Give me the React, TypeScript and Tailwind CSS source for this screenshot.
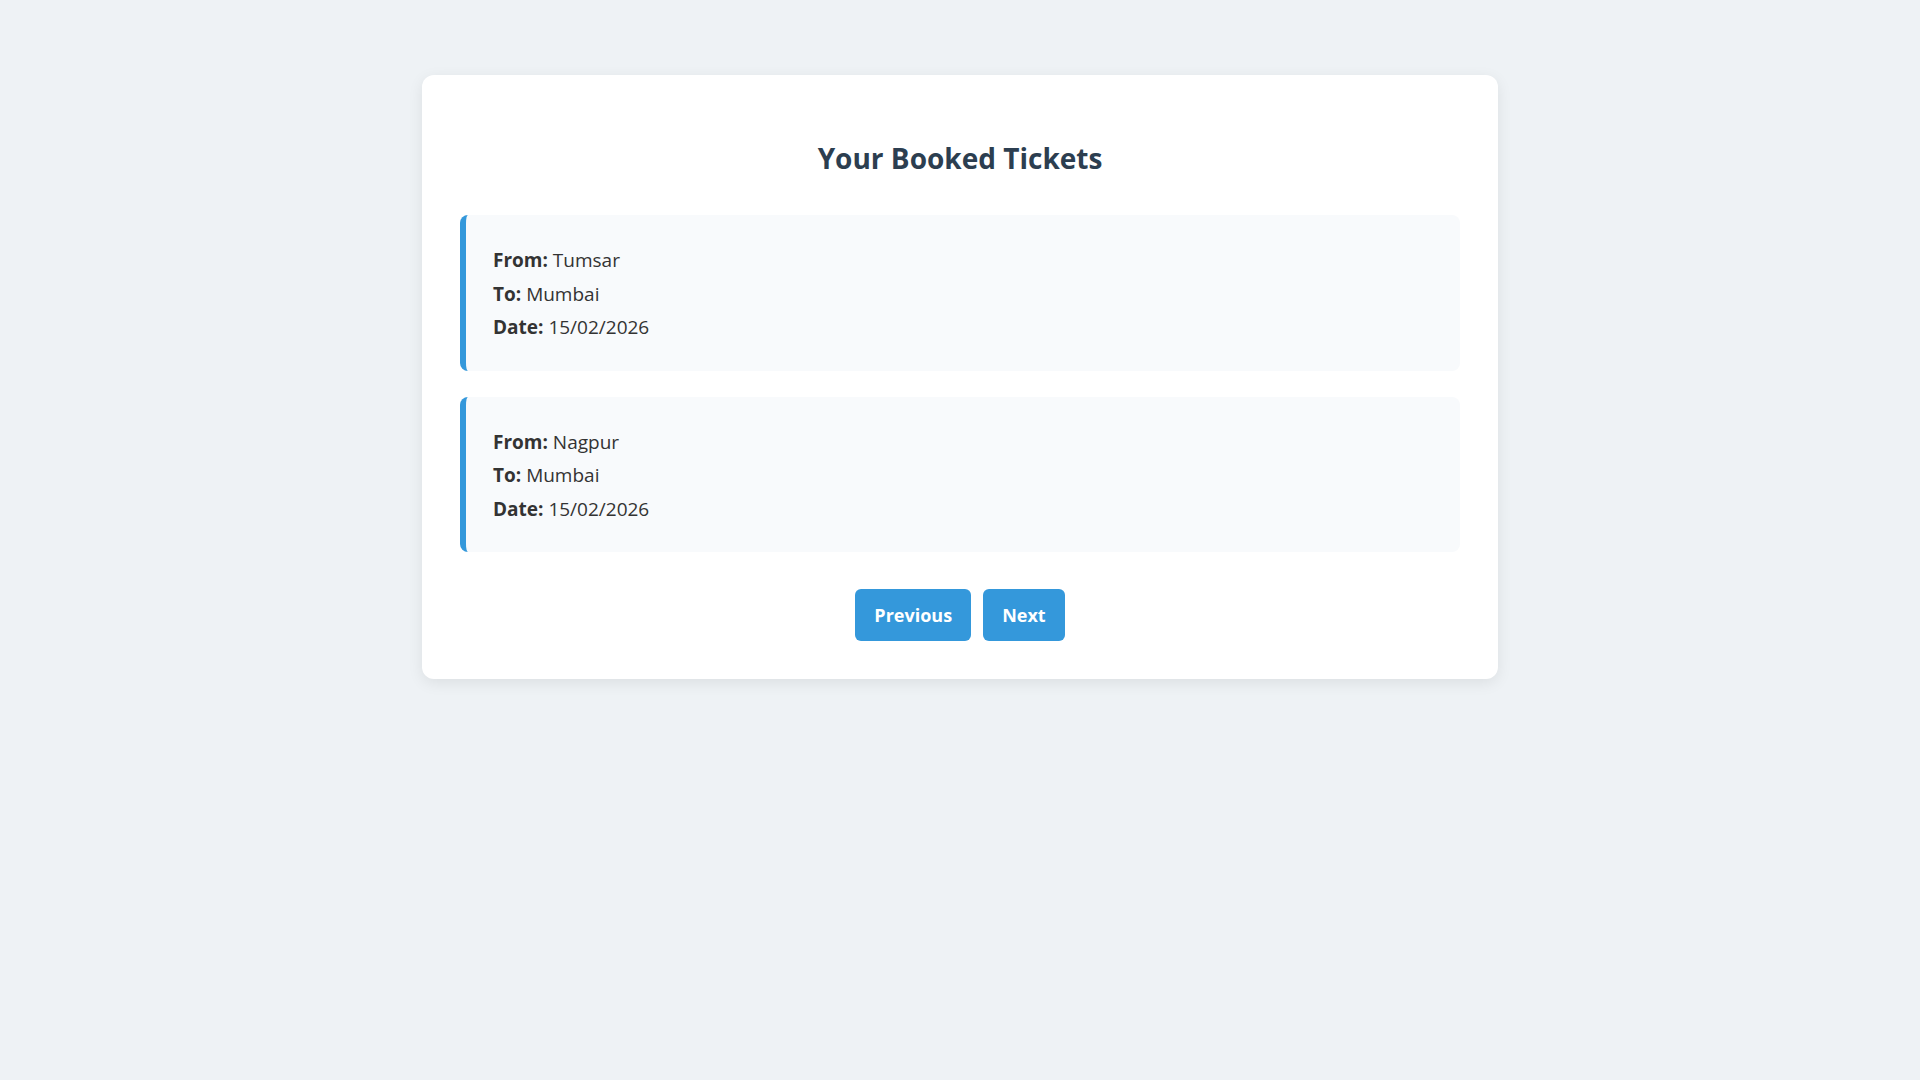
export default function App() {
  const tickets = [
    { from: "Tumsar", to: "Mumbai", date: "15/02/2026" },
    { from: "Nagpur", to: "Mumbai", date: "15/02/2026" }
  ];

  return (
    <div
      className="min-h-screen bg-[#eef2f5] pt-[75px]"
      style={{ fontFamily: '"Open Sans", "Noto Sans", sans-serif' }}
    >
      <div className="mx-auto w-[1076px] rounded-[12px] bg-white p-[38px] shadow-[0_4px_15px_rgba(0,0,0,0.08)]">
        <h2 className="mt-[28px] mb-[40px] text-center text-[28px] leading-[34px] font-bold text-[#2c3e50]">
          Your Booked Tickets
        </h2>

        <div className="flex flex-col gap-[26px]">
          {tickets.map((ticket, index) => (
            <div
              key={index}
              className="rounded-[8px] border-l-[6px] border-[#3498db] bg-[#f8fafc] pt-[29px] pb-[26px] pl-[27px] text-[19px] leading-[33.5px] text-[#333]"
            >
              <p>
                <strong>From:</strong> {ticket.from}
              </p>
              <p>
                <strong>To:</strong> {ticket.to}
              </p>
              <p>
                <strong>Date:</strong> {ticket.date}
              </p>
            </div>
          ))}
        </div>

        <div className="mt-[37px] flex justify-center gap-[12px]">
          <button className="rounded-[6px] bg-[#3498db] px-[19px] py-[15px] text-[18px] leading-[22px] font-bold text-white">
            Previous
          </button>
          <button className="rounded-[6px] bg-[#3498db] px-[19px] py-[15px] text-[18px] leading-[22px] font-bold text-white">
            Next
          </button>
        </div>
      </div>
    </div>
  );
}
